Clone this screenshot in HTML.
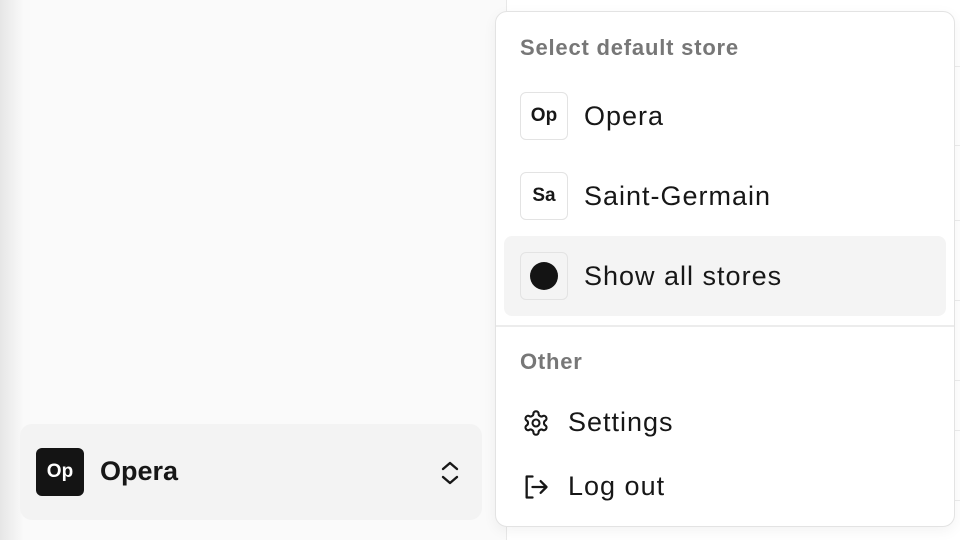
<!DOCTYPE html>
<html><head><style>
*{margin:0;padding:0;box-sizing:border-box}
body{width:960px;height:540px;overflow:hidden;background:#fff;font-family:"Liberation Sans",sans-serif;position:relative;color:#171717}
.side{position:absolute;left:0;top:0;width:507px;height:540px;background:#fafafa;border-right:1px solid #e8e8e8}
.shade{position:absolute;left:0;top:0;width:24px;height:540px;background:linear-gradient(90deg,#e6e6e6,#fafafa)}
.btn{position:absolute;left:20px;top:424px;width:462px;height:96px;background:#f3f3f3;border-radius:12px}
.logo{position:absolute;left:16px;top:24px;width:48px;height:48px;background:#141414;border-radius:6px;color:#fff;font-weight:700;font-size:19px;display:flex;align-items:center;justify-content:center}
.btn .t{position:absolute;left:80px;top:32px;font-size:27px;font-weight:700;letter-spacing:0px}
.line{position:absolute;left:508px;right:0;height:1px;background:#ececec}
.menu{position:absolute;left:495px;top:11px;width:460px;height:516px;background:#fff;border:1.5px solid #e3e3e3;border-radius:12px;box-shadow:0 4px 14px rgba(0,0,0,.05)}
.h{position:absolute;left:24px;font-size:22px;color:#777;font-weight:700;letter-spacing:0.8px}
.it{position:absolute;left:24px;height:48px;display:flex;align-items:center}
.box{width:48px;height:48px;border:1.5px solid #e3e3e3;border-radius:6px;display:flex;align-items:center;justify-content:center;font-weight:700;font-size:19px;background:#fff}
.it span{margin-left:16px;font-size:27px;letter-spacing:1px}
.hl{position:absolute;left:8px;top:224px;width:442px;height:80px;background:#f4f4f4;border-radius:8px}
.div{position:absolute;left:0;right:0;top:313px;height:1.5px;background:#ececec}
.ic{position:absolute;left:26px;display:flex;align-items:center}
.ic span{margin-left:18px;font-size:27px;letter-spacing:1px}
</style></head><body>
<div class="side"><div class="shade"></div>
<div class="btn"><div class="logo">Op</div><div class="t">Opera</div>
<svg style="position:absolute;left:420px;top:36px" width="20" height="26" viewBox="0 0 20 26" fill="none" stroke="#171717" stroke-width="2.4" stroke-linecap="round" stroke-linejoin="round"><path d="M3 9l7-6 7 6M3 17l7 6 7-6"/></svg>
</div></div>
<div class="line" style="top:66px"></div><div class="line" style="top:145px"></div><div class="line" style="top:220px"></div><div class="line" style="top:300px"></div><div class="line" style="top:380px"></div><div class="line" style="top:430px"></div><div class="line" style="top:500px"></div>
<div class="menu">
<div class="h" style="top:23px">Select default store</div>
<div class="it" style="top:80px"><div class="box">Op</div><span>Opera</span></div>
<div class="it" style="top:160px"><div class="box">Sa</div><span>Saint-Germain</span></div>
<div class="hl"></div>
<div class="it" style="top:240px"><div class="box" style="background:#f4f4f4"><div style="width:28px;height:28px;border-radius:50%;background:#141414"></div></div><span>Show all stores</span></div>
<div class="div"></div>
<div class="h" style="top:337px">Other</div>
<div class="ic" style="top:395px"><svg width="28" height="28" viewBox="0 0 24 24" fill="none" stroke="#171717" stroke-width="1.8" stroke-linecap="round" stroke-linejoin="round"><path d="M12.22 2h-.44a2 2 0 0 0-2 2v.18a2 2 0 0 1-1 1.730l-.43.25a2 2 0 0 1-2 0l-.15-.08a2 2 0 0 0-2.73.73l-.22.38a2 2 0 0 0 .73 2.73l.15.1a2 2 0 0 1 1 1.72v.51a2 2 0 0 1-1 1.74l-.15.09a2 2 0 0 0-.73 2.73l.22.38a2 2 0 0 0 2.73.73l.15-.08a2 2 0 0 1 2 0l.43.25a2 2 0 0 1 1 1.73V20a2 2 0 0 0 2 2h.44a2 2 0 0 0 2-2v-.18a2 2 0 0 1 1-1.73l.43-.25a2 2 0 0 1 2 0l.15.08a2 2 0 0 0 2.73-.73l.22-.39a2 2 0 0 0-.73-2.73l-.15-.08a2 2 0 0 1-1-1.74v-.5a2 2 0 0 1 1-1.74l.15-.09a2 2 0 0 0 .73-2.73l-.22-.38a2 2 0 0 0-2.73-.73l-.15.08a2 2 0 0 1-2 0l-.43-.25a2 2 0 0 1-1-1.73V4a2 2 0 0 0-2-2z"/><circle cx="12" cy="12" r="3"/></svg><span>Settings</span></div>
<div class="ic" style="top:459px"><svg width="28" height="28" viewBox="0 0 24 24" fill="none" stroke="#171717" stroke-width="2" stroke-linecap="round" stroke-linejoin="round"><path d="M9 21H4V3h5M16 17l5-5-5-5M21 12H9"/></svg><span>Log out</span></div>
</div>
</body></html>
